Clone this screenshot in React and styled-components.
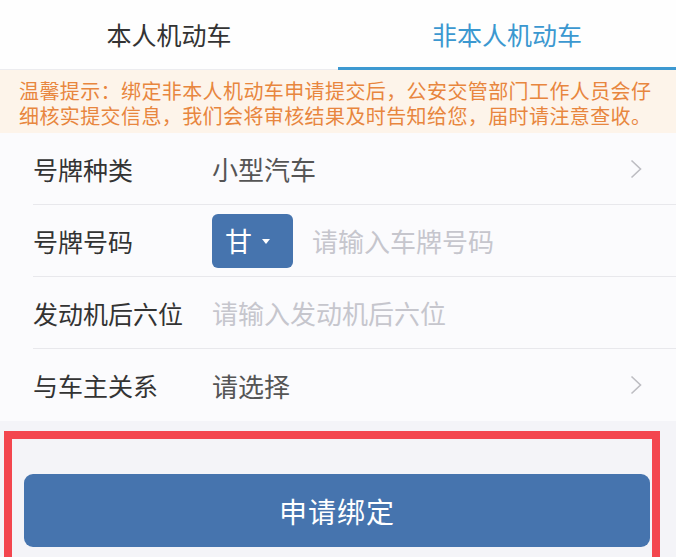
import React, { useState } from "react";
import styled, { createGlobalStyle } from "styled-components";

const Global = createGlobalStyle`
  html, body {
    margin: 0;
    padding: 0;
    background: #f4f4f8;
    font-family: "Noto Sans CJK SC", "Noto Sans", sans-serif;
  }
  * { box-sizing: border-box; }
`;

const Page = styled.div`
  width: 676px;
  height: 557px;
  overflow: hidden;
  background: #f4f4f8;
  display: flex;
  flex-direction: column;
`;

const Tabs = styled.div`
  display: flex;
  height: 70px;
  background: #fefefe;
  border-bottom: 1px solid #ececef;
`;

const Tab = styled.div`
  flex: 1;
  display: flex;
  align-items: center;
  justify-content: center;
  font-size: 25px;
  color: ${(p) => (p.active ? "#3b98d0" : "#333")};
  border-bottom: 3px solid ${(p) => (p.active ? "#3d99d1" : "transparent")};
  margin-bottom: -1px;
  cursor: pointer;
`;

const Notice = styled.div`
  background: #fdf4ea;
  color: #e8863e;
  font-size: 20px;
  line-height: 25px;
  letter-spacing: 0.4px;
  white-space: nowrap;
  padding: 8px 10px 5px 19px;
  height: 63px;
`;

const Form = styled.div`
  background: #fbfbfd;
`;

const Row = styled.div`
  height: 72px;
  margin-left: 33px;
  display: flex;
  align-items: center;
  border-bottom: ${(p) => (p.last ? "none" : "1px solid #e8e8ec")};
  padding-right: 34px;
`;

const Label = styled.div`
  width: 179px;
  flex-shrink: 0;
  font-size: 25px;
  color: #333;
`;

const Value = styled.div`
  flex: 1;
  font-size: 26px;
  color: ${(p) => (p.placeholder ? "#c6c6cd" : "#555")};
`;

const Plate = styled.div`
  width: 81px;
  height: 54px;
  border-radius: 6px;
  background: #4674ae;
  color: #fff;
  display: flex;
  align-items: center;
  padding-left: 13px;
  font-size: 27px;
  margin-right: 19px;
  flex-shrink: 0;
`;

const Caret = styled.span`
  width: 0;
  height: 0;
  border-left: 4px solid transparent;
  border-right: 4px solid transparent;
  border-top: 5px solid #fff;
  margin-left: 10px;
  margin-top: 2px;
`;

const Footer = styled.div`
  position: relative;
  flex: 1;
  background: #f4f4f8;
  padding: 53px 26px 0 24px;
`;

const Annotation = styled.div`
  position: absolute;
  top: 10px;
  left: 4px;
  right: 16px;
  bottom: -20px;
  border: 8px solid #f3464f;
  pointer-events: none;
`;

const Submit = styled.button`
  width: 100%;
  height: 73px;
  border: none;
  border-radius: 9px;
  background: #4674ae;
  color: #fff;
  font-family: inherit;
  font-size: 28px;
  letter-spacing: 1px;
  cursor: pointer;
`;

const Chevron = () => (
  <svg width="12" height="20" viewBox="0 0 12 20">
    <polyline points="1.5,1.5 10.5,10 1.5,18.5" fill="none" stroke="#bdbdc2" strokeWidth="1.6" />
  </svg>
);

export default function App() {
  const [tab, setTab] = useState(1);
  return (
    <>
      <Global />
      <Page>
        <Tabs>
          <Tab active={tab === 0} onClick={() => setTab(0)}>本人机动车</Tab>
          <Tab active={tab === 1} onClick={() => setTab(1)}>非本人机动车</Tab>
        </Tabs>
        <Notice>
          温馨提示：绑定非本人机动车申请提交后，公安交管部门工作人员会仔
          <br />
          细核实提交信息，我们会将审核结果及时告知给您，届时请注意查收。
        </Notice>
        <Form>
          <Row>
            <Label>号牌种类</Label>
            <Value>小型汽车</Value>
            <Chevron />
          </Row>
          <Row>
            <Label>号牌号码</Label>
            <Plate>
              甘<Caret />
            </Plate>
            <Value placeholder>请输入车牌号码</Value>
          </Row>
          <Row>
            <Label>发动机后六位</Label>
            <Value placeholder>请输入发动机后六位</Value>
          </Row>
          <Row last>
            <Label>与车主关系</Label>
            <Value>请选择</Value>
            <Chevron />
          </Row>
        </Form>
        <Footer>
          <Submit>申请绑定</Submit>
          <Annotation />
        </Footer>
      </Page>
    </>
  );
}
